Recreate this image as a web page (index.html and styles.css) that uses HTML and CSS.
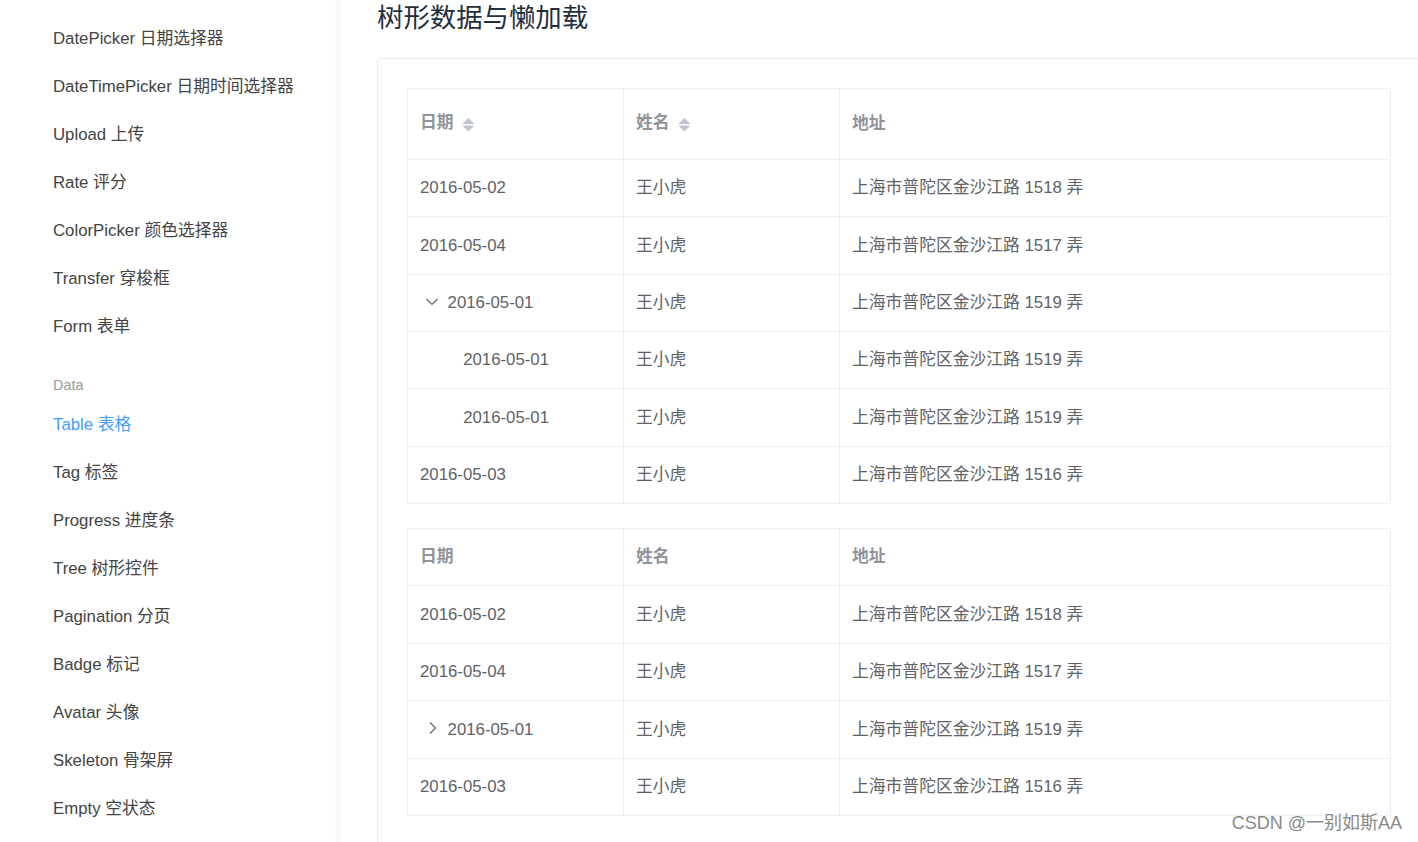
FILE: index.html
```html
<!DOCTYPE html>
<html lang="zh-CN">
<head>
<meta charset="utf-8">
<title>Table 表格</title>
<link rel="stylesheet" href="styles.css">
</head>
<body>
<div class="page">
  <aside class="sidebar">
    <ul class="nav">
      <li class="nav-item">DatePicker 日期选择器</li>
      <li class="nav-item">DateTimePicker 日期时间选择器</li>
      <li class="nav-item">Upload 上传</li>
      <li class="nav-item">Rate 评分</li>
      <li class="nav-item">ColorPicker 颜色选择器</li>
      <li class="nav-item">Transfer 穿梭框</li>
      <li class="nav-item">Form 表单</li>
    </ul>
    <div class="nav-group">Data</div>
    <ul class="nav">
      <li class="nav-item active">Table 表格</li>
      <li class="nav-item">Tag 标签</li>
      <li class="nav-item">Progress 进度条</li>
      <li class="nav-item">Tree 树形控件</li>
      <li class="nav-item">Pagination 分页</li>
      <li class="nav-item">Badge 标记</li>
      <li class="nav-item">Avatar 头像</li>
      <li class="nav-item">Skeleton 骨架屏</li>
      <li class="nav-item">Empty 空状态</li>
    </ul>
  </aside>
  <main class="main">
    <h3 class="title">树形数据与懒加载</h3>
    <div class="demo">
      <table class="table">
        <colgroup><col class="c1"><col class="c2"><col class="c3"></colgroup>
        <thead>
          <tr>
            <th><div class="cell">日期<svg class="caret" viewBox="0 0 29 41" width="29" height="41"><polygon points="8.4,21 20.4,21 14.4,15" fill="#C0C4CC"/><polygon points="8.4,22.6 20.4,22.6 14.4,28.4" fill="#C0C4CC"/></svg></div></th>
            <th><div class="cell">姓名<svg class="caret" viewBox="0 0 29 41" width="29" height="41"><polygon points="8.4,21 20.4,21 14.4,15" fill="#C0C4CC"/><polygon points="8.4,22.6 20.4,22.6 14.4,28.4" fill="#C0C4CC"/></svg></div></th>
            <th><div class="cell">地址</div></th>
          </tr>
        </thead>
        <tbody>
          <tr><td><div class="cell">2016-05-02</div></td><td><div class="cell">王小虎</div></td><td><div class="cell">上海市普陀区金沙江路 1518 弄</div></td></tr>
          <tr><td><div class="cell">2016-05-04</div></td><td><div class="cell">王小虎</div></td><td><div class="cell">上海市普陀区金沙江路 1517 弄</div></td></tr>
          <tr><td><div class="cell"><span class="expand"><svg viewBox="0 0 24 24" width="24" height="24"><polyline points="6.5,10 12,15.5 17.5,10" fill="none" stroke="#666" stroke-width="1.2"/></svg></span>2016-05-01</div></td><td><div class="cell">王小虎</div></td><td><div class="cell">上海市普陀区金沙江路 1519 弄</div></td></tr>
          <tr><td><div class="cell"><span class="indent"></span><span class="placeholder"></span>2016-05-01</div></td><td><div class="cell">王小虎</div></td><td><div class="cell">上海市普陀区金沙江路 1519 弄</div></td></tr>
          <tr><td><div class="cell"><span class="indent"></span><span class="placeholder"></span>2016-05-01</div></td><td><div class="cell">王小虎</div></td><td><div class="cell">上海市普陀区金沙江路 1519 弄</div></td></tr>
          <tr><td><div class="cell">2016-05-03</div></td><td><div class="cell">王小虎</div></td><td><div class="cell">上海市普陀区金沙江路 1516 弄</div></td></tr>
        </tbody>
      </table>
      <table class="table second">
        <colgroup><col class="c1"><col class="c2"><col class="c3"></colgroup>
        <thead>
          <tr><th><div class="cell">日期</div></th><th><div class="cell">姓名</div></th><th><div class="cell">地址</div></th></tr>
        </thead>
        <tbody>
          <tr><td><div class="cell">2016-05-02</div></td><td><div class="cell">王小虎</div></td><td><div class="cell">上海市普陀区金沙江路 1518 弄</div></td></tr>
          <tr><td><div class="cell">2016-05-04</div></td><td><div class="cell">王小虎</div></td><td><div class="cell">上海市普陀区金沙江路 1517 弄</div></td></tr>
          <tr><td><div class="cell"><span class="expand"><svg viewBox="0 0 24 24" width="24" height="24"><polyline points="10,6.5 15.5,12 10,17.5" fill="none" stroke="#666" stroke-width="1.2"/></svg></span>2016-05-01</div></td><td><div class="cell">王小虎</div></td><td><div class="cell">上海市普陀区金沙江路 1519 弄</div></td></tr>
          <tr><td><div class="cell">2016-05-03</div></td><td><div class="cell">王小虎</div></td><td><div class="cell">上海市普陀区金沙江路 1516 弄</div></td></tr>
        </tbody>
      </table>
    </div>
  </main>
</div>
<div class="watermark">CSDN @一别如斯AA</div>
</body>
</html>
```
FILE: styles.css
```css
html, body {
  margin: 0;
  padding: 0;
  height: 842px;
  overflow: hidden;
  background: #fff;
  font-family: "Liberation Sans", Arial, "Noto Sans CJK SC", sans-serif;
}
.page {
  display: flex;
  height: 842px;
  overflow: hidden;
}
.sidebar {
  width: 341px;
  flex: none;
  padding-top: 15px;
  box-sizing: border-box;
  background: linear-gradient(to right, #fff 0, #fff 335px, #f9f9f9 337px, #f9f9f9 340px, #fff 341px);
}
.nav {
  list-style: none;
  margin: 0;
  padding: 0;
}
.nav-item {
  height: 48px;
  line-height: 48px;
  padding-left: 53px;
  font-size: 16.8px;
  color: #444;
  white-space: nowrap;
}
.nav-item.active {
  color: #409EFF;
}
.nav-group {
  padding: 24px 0 0 53px;
  height: 20px;
  line-height: 20px;
  margin-bottom: 6px;
  font-size: 14.4px;
  color: #999;
}
.main {
  flex: none;
  padding-left: 36px;
}
.title {
  margin: 0 0 21px;
  font-size: 26.4px;
  font-weight: 400;
  line-height: 37px;
  color: #1f2f3d;
}
.demo {
  width: 1043px;
  box-sizing: border-box;
  border: 1px solid #ebebeb;
  border-bottom: 0;
  border-radius: 3px 3px 0 0;
  padding: 29px 29px 0;
  height: 784px;
}
.table {
  width: 984px;
  table-layout: fixed;
  border-collapse: separate;
  border-spacing: 0;
  border-left: 1px solid #EBEEF5;
  border-top: 1px solid #EBEEF5;
  font-size: 16.8px;
  color: #606266;
}
.table.second {
  margin-top: 24px;
}
.c1, .c2 { width: 216px; }
.c3 { width: 551px; }
.table th, .table td {
  padding: 14.4px 0;
  border-right: 1px solid #EBEEF5;
  border-bottom: 1px solid #EBEEF5;
  text-align: left;
  vertical-align: middle;
}
.table th {
  color: #909399;
  font-weight: 700;
}
.cell {
  padding: 0 12px;
  line-height: 27.6px;
  white-space: nowrap;
}
.caret {
  vertical-align: middle;
  display: inline-block;
}
.expand {
  display: inline-block;
  width: 24px;
  height: 24px;
  margin-right: 3.6px;
  vertical-align: middle;
  position: relative;
  top: -2px;
}
.expand svg { display: block; }
.indent {
  display: inline-block;
  width: 19.2px;
}
.placeholder {
  display: inline-block;
  width: 24px;
}
.watermark {
  position: absolute;
  right: 16px;
  bottom: 8px;
  font-size: 18px;
  color: #8a8a8a;
  text-shadow: 0 0 2px #fff;
  font-family: "Liberation Sans", Arial, "Noto Sans CJK SC", sans-serif;
}
```
